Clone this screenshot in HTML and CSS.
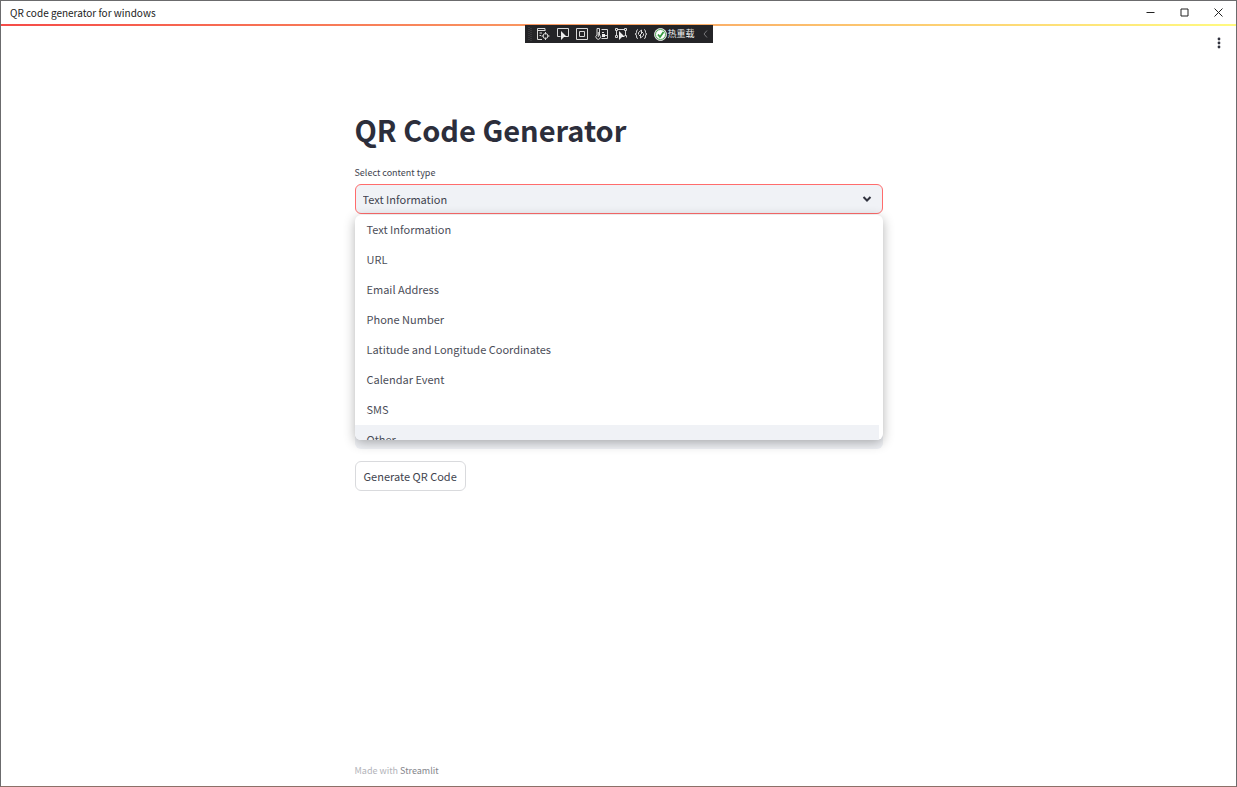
FILE: index.html
```html
<!DOCTYPE html>
<html lang="en">
<head>
<meta charset="utf-8">
<title>QR code generator for windows</title>
<link rel="stylesheet" href="styles.css">
</head>
<body>
<div class="window">
  <header class="titlebar">
    <span class="titlebar-text">QR code generator for windows</span>
    <div class="window-controls">
      <button class="window-button" aria-label="Minimize"><svg width="9" height="9" viewBox="0 0 9 9"><path d="M0.500 4.500h8"/></svg></button>
      <button class="window-button" aria-label="Maximize"><svg width="9" height="9" viewBox="0 0 9 9"><path d="M1 1h7v7H1z"/></svg></button>
      <button class="window-button" aria-label="Close"><svg width="9" height="9" viewBox="0 0 9 9"><path d="M.5 .5l8 8M8.500 .5l-8 8"/></svg></button>
    </div>
  </header>
  <div class="decoration"></div>

  <div class="debug-bar" role="toolbar">
    <svg class="grip" width="4" height="14" viewBox="0 0 4 14"><path d="M1 0v14M3 1v13" stroke-dasharray="1 1"/></svg>
    <button class="tool" aria-label="Live visual tree"><svg width="14" height="14" viewBox="0 0 14 14"><path d="M9 4V1.500H1.500V12.500H6M1.500 3.500H9M3.500 6H6M3.500 8.500H5"/><circle cx="9.500" cy="9" r="2.500"/><path d="M9.500 5v2.500M9.500 10.500V13M5.500 9H8M11 9h2.500"/></svg></button>
    <button class="tool" aria-label="Select element"><svg width="14" height="14" viewBox="0 0 14 14"><path d="M4.500 9.500H1.500V1.500H12.500V9.500H10"/><path class="solid" d="M5 4l6 6H8l-3 3z"/></svg></button>
    <button class="tool" aria-label="Display layout adorners"><svg width="14" height="14" viewBox="0 0 14 14"><path d="M1.500 1.500h11v11h-11zM4.500 4.500h5v5h-5z"/></svg></button>
    <button class="tool" aria-label="Diagnostics"><svg width="14" height="14" viewBox="0 0 14 14"><path d="M2 1.500h2.500V8M2 1.500V8a2.300 2.300 0 1 0 2.500 0M3.300 5v5M6.500 2.500h6v9h-6M7 5.500h2M10 8.500h2"/><path class="solid" d="M7 7h3v3H7z"/></svg></button>
    <button class="tool" aria-label="Track focused element"><svg width="14" height="14" viewBox="0 0 14 14"><path d="M3 2.500h8M2.500 4v5M11.500 4v4M1.500 1.500h2v2h-2zM10.500 1.500h2v2h-2zM1.500 8.500h2v2h-2zM10.500 8.500h2v2"/><path class="solid" d="M5 4l6 6H8l-3 3z"/></svg></button>
    <button class="tool" aria-label="Binding failures"><svg width="14" height="14" viewBox="0 0 14 14"><path d="M4 2.500Q2 3 2.500 5.500 2.500 7 1 7 2.500 7 2.500 9 2 11.500 4 11.500M10 2.500q2 .5 1.500 3 0 1.500 1.500 1.500-1.500 0-1.500 2 .5 2.500-1.500 2.500M4.500 7.500V5.500l3-2.500v3M9.500 6.500v2l-3 2.500V8M5 9l4-4"/></svg></button>
    <button class="hot-reload"><svg width="13" height="13" viewBox="0 0 13 13"><circle cx="6.500" cy="6.500" r="6" fill="#eef7ee"/><circle cx="6.500" cy="6.500" r="5" fill="#fff" stroke="#54a45a"/><path d="M4 6.500l2 2.500 3.500-5" stroke="#369c40" stroke-width="1.800"/></svg><span>热重载</span></button>
    <button class="collapse" aria-label="Collapse"><svg width="5" height="8" viewBox="0 0 5 8"><path d="M4 .5L1 4l3 3.500"/></svg></button>
  </div>

  <button class="menu-button" aria-label="Main menu"><svg width="4" height="12" viewBox="0 0 4 12"><circle cx="2" cy="2" r="1.400"/><circle cx="2" cy="6" r="1.400"/><circle cx="2" cy="10" r="1.400"/></svg></button>

  <main class="content">
    <h1 class="heading">QR Code Generator</h1>
    <label class="field-label" for="content-type">Select content type</label>
    <div class="select-wrap">
      <select class="select" id="content-type"><option>Text Information</option></select>
      <svg class="chevron" width="10" height="8" viewBox="0 0 10 8"><path d="M1.500 2L5 5.500 8.500 2"/></svg>
      <ul class="options" role="listbox">
        <li class="option" role="option">Text Information</li>
        <li class="option" role="option">URL</li>
        <li class="option" role="option">Email Address</li>
        <li class="option" role="option">Phone Number</li>
        <li class="option" role="option">Latitude and Longitude Coordinates</li>
        <li class="option" role="option">Calendar Event</li>
        <li class="option" role="option">SMS</li>
        <li class="option option-active" role="option">Other</li>
      </ul>
    </div>
    <textarea class="text-area" aria-label="Text"></textarea>
    <button class="generate">Generate QR Code</button>
  </main>

  <footer class="footer">Made with <a class="footer-link" href="#">Streamlit</a></footer>
</div>
</body>
</html>
```
FILE: styles.css
```css
* {
  box-sizing: border-box;
}

body {
  margin: 0;
  font-family: "Noto Sans CJK SC", "Noto Sans", sans-serif;
  font-size: 11px;
  color: #31333f;
}

button {
  margin: 0;
  padding: 0;
  border: 0;
  background: none;
  color: inherit;
  font: inherit;
}

svg {
  display: block;
  fill: none;
}

.window {
  position: relative;
  display: flex;
  flex-direction: column;
  min-height: 100vh;
  border: 1px solid #6b6b6d;
  border-bottom-color: #8c7068;
  background: #fff;
}

.titlebar {
  display: flex;
  align-items: center;
  justify-content: space-between;
  height: 23px;
  padding-left: 9px;
  font-size: 10px;
  color: #222;
}

.window-controls {
  display: flex;
  padding-right: 1px;
}

.window-button {
  display: grid;
  place-items: center;
  width: 34px;
  height: 23px;
  stroke: #222;
}

.decoration {
  height: 2px;
  background: linear-gradient(90deg, #f54b48, #fffa80);
}

.debug-bar {
  position: absolute;
  top: 24px;
  left: 50%;
  display: flex;
  align-items: center;
  width: 188px;
  height: 18px;
  padding-left: 3px;
  background: #242427;
  color: #f0f0f0;
  stroke: #d8d8d8;
  transform: translateX(-50%);
}

.grip {
  margin-right: 2px;
  stroke: #4b4b4e;
}

.tool {
  display: grid;
  place-items: center;
  flex: 1;
  height: 18px;
}

.tool .solid {
  fill: #eee;
  stroke: none;
}

.hot-reload {
  display: flex;
  align-items: center;
  gap: 1px;
  margin-left: 3px;
  font-size: 9px;
  line-height: 18px;
}

.collapse {
  display: grid;
  place-items: center;
  width: 18px;
  padding-left: 4px;
  stroke: #77777a;
}

.menu-button {
  align-self: flex-end;
  display: grid;
  place-items: center;
  width: 18px;
  height: 18px;
  margin: 8px 8px 0 0;
  fill: #31333f;
}

.menu-button svg {
  fill: inherit;
}

.content {
  display: flex;
  flex-direction: column;
  align-items: stretch;
  width: 100%;
  max-width: 528px;
  margin: 0 auto;
  padding-top: 57px;
}

.heading {
  margin: 0 0 16px;
  font-size: 29px;
  line-height: 40px;
  font-weight: 700;
  color: #2c2e3b;
}

.field-label {
  margin-bottom: 3px;
  font-size: 9px;
  line-height: 16px;
  color: #41434e;
}

.select-wrap {
  position: relative;
}

.select {
  display: block;
  width: 100%;
  height: 30px;
  padding: 0 7px;
  border: 1px solid #ff6c6c;
  border-radius: 6px;
  outline: 0;
  background: #f0f2f6;
  color: #41434e;
  font: inherit;
  appearance: none;
}

.chevron {
  position: absolute;
  top: 11px;
  right: 11px;
  stroke: #31333f;
  stroke-width: 2;
}

.options {
  position: absolute;
  top: 31px;
  left: 0;
  right: 0;
  height: 225px;
  margin: 0;
  padding: 0 4px 0 0;
  overflow: hidden;
  border-radius: 6px;
  background: #fff;
  box-shadow: 0 3px 12px rgba(0, 0, 0, 0.3);
  list-style: none;
}

.option {
  height: 30px;
  padding: 0 12px;
  line-height: 28px;
  color: #4b4d58;
}

.option-active {
  background: #f0f2f6;
}

.text-area {
  height: 150px;
  margin-top: 85px;
  border: 0;
  border-radius: 6px;
  background: #f0f2f6;
  resize: none;
}

.generate {
  align-self: flex-start;
  height: 30px;
  margin-top: 12px;
  padding: 0 8px;
  border: 1px solid #d9dadd;
  border-radius: 6px;
  background: #fff;
  color: #41434e;
}

.footer {
  width: 100%;
  max-width: 528px;
  margin: auto auto 7px;
  font-size: 9px;
  line-height: 16px;
  color: #b2b3b9;
}

.footer-link {
  color: #84858c;
  text-decoration: none;
}
```
